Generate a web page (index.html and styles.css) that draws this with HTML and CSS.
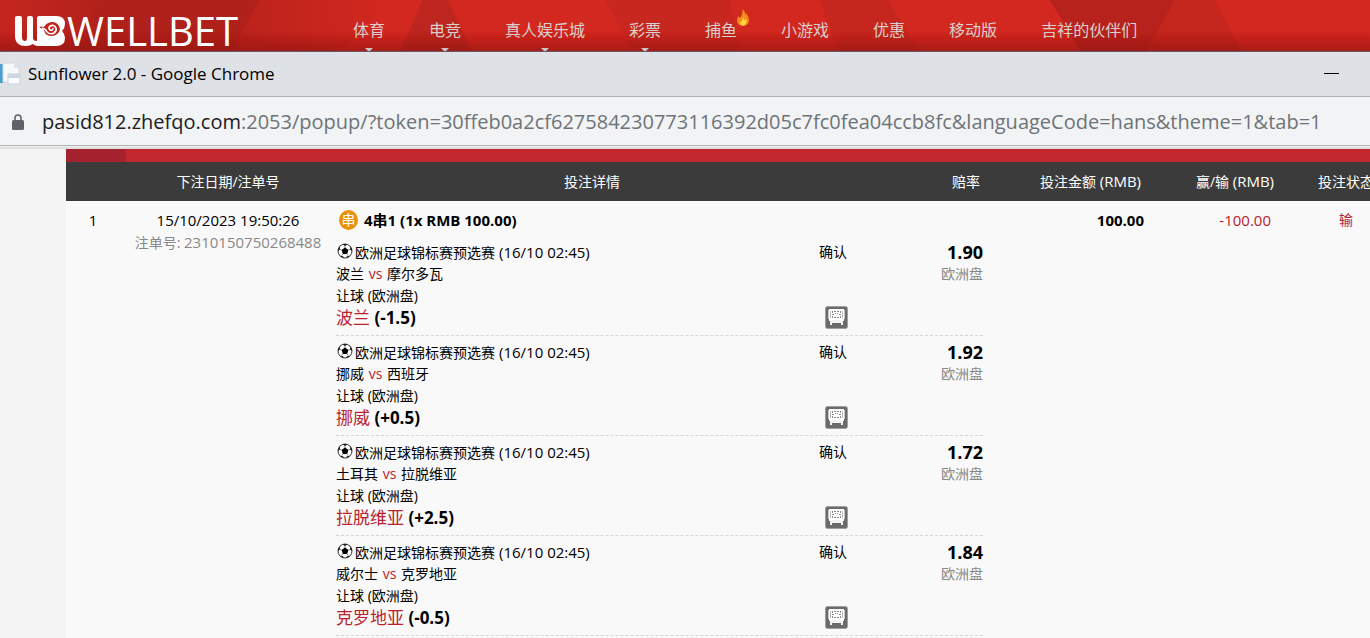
FILE: index.html
```html
<!DOCTYPE html>
<html lang="zh-Hans">
<head>
<meta charset="utf-8">
<meta name="viewport" content="width=device-width, initial-scale=1">
<title>Sunflower 2.0</title>
<link rel="stylesheet" href="styles.css">
</head>
<body>
<svg class="sprites" aria-hidden="true">
  <symbol id="ball" viewBox="0 0 16 16">
    <circle cx="8" cy="8" r="7" fill="#fff" stroke="#333" stroke-width="1"/>
    <path d="M8 4.6l3.4 2.4-1.3 3.9H5.9L4.6 7z" fill="#000"/>
    <path d="M5.4 1.4L8 3l2.600-1.600A7 7 0 0 0 5.400 1.400zM1 8.200l2-1.900-.400-2.700A7 7 0 0 0 1 8.200zM15 8.200l-2-1.900.400-2.700A7 7 0 0 1 15 8.200zM3.200 13l2.900.200.600 1.700A7 7 0 0 1 3.200 13zM12.800 13l-2.900.200-.600 1.700A7 7 0 0 0 12.800 13z" fill="#111"/>
    <path d="M8 3v2M3 6.300l1.800.800M13 6.300l-1.800.800M6 10.700l-1.200 2M10 10.700l1.200 2" stroke="#555" stroke-width=".7"/>
  </symbol>
  <symbol id="board" viewBox="0 0 23 23">
    <rect x=".5" y=".5" width="22" height="22" rx="2" fill="#6b6b6b" stroke="#a0a0a0"/>
    <path d="M4 3h15v11H4z" fill="#fff"/>
    <path d="M3 4h1v9H3zM19 4h1v9h-1z" fill="#c9c9c9"/>
    <path d="M4 14h15v1h-1v4h-2v-2H7v2H5v-4H4z" fill="#f4f4f4"/>
    <path d="M5 5h1v7H5zM17 5h1v7h-1z" fill="#bbb"/>
    <path d="M7 5h1v2H7zM9 5h2v1H9zM10 7h1v1h-1zM7 8h2v1H7zM7 10h1v2H7zM9 11h2v1H9zM12 5h2v1h-2zM15 5h1v2h-1zM12 7h1v1h-1zM14 8h2v1h-2zM15 10h1v2h-1zM12 11h2v1h-2z" fill="#8d8d8d"/>
  </symbol>
</svg>

<header class="site">
  <svg class="site-backdrop" viewBox="0 0 1370 51" preserveAspectRatio="none" aria-hidden="true">
    <defs>
      <linearGradient id="g1"><stop offset="0" stop-color="#c4261f"/><stop offset="1" stop-color="#b3211b"/></linearGradient>
      <linearGradient id="g2"><stop offset="0" stop-color="#ba231c"/><stop offset="1" stop-color="#d2281f"/></linearGradient>
      <linearGradient id="g3" x2="0" y2="1"><stop offset=".6" stop-color="#900" stop-opacity="0"/><stop offset="1" stop-color="#8b1712" stop-opacity=".6"/></linearGradient>
    </defs>
    <path d="M0 0h1370v51H0z" fill="#d2281f"/>
    <path d="M0 0h97L75 51H0z" fill="url(#g1)"/>
    <path d="M97 0h163l-28 51H75z" fill="#b0211b"/>
    <path d="M260 0h130L340 51H232z" fill="url(#g2)"/>
    <path d="M423 0h25l24 51h-72z" fill="#bd261e"/>
    <path d="M605 0h125l10 51H634z" fill="#c8271f"/>
    <path d="M820 0h68l30 51h-80z" fill="#c5261e"/>
    <path d="M1050 0h125l-28 51h-67z" fill="#b7231c"/>
    <path d="M1175 0h40l26 51h-94z" fill="#c5261e"/>
    <path d="M0 0h1370v51H0z" fill="url(#g3)"/>
  </svg>
  <a class="logo" href="#" aria-label="WELLBET">
    <svg class="logo-mark" viewBox="0 0 50 30" aria-hidden="true">
      <path d="M2 0h3a2 2 0 0 1 2 2v19q0 4 3 4 2 0 2-4V2a2 2 0 0 1 2-2h2a2 2 0 0 1 2 2v20q0 3 4 3V2q0-2 2-2h17q9 0 9 8 0 4-3 7 3 3 3 7 0 8-9 8H23q-3 0-5-2-3 2-7 2-11 0-11-10V2q0-2 2-2z" fill="#fff"/>
      <path d="M24 11q3-1 5 0 3-5 9-5 6 1 7 7-1 6-8 7-7 0-8-6-3-2-5-3z" fill="#c2251e"/>
      <path d="M27 12q4 1 5 4 3 3 7 1 3-2 2-5-2-4-6-2-2 2 0 4 3 1 3-2" fill="none" stroke="#fff" stroke-width="1.600"/>
    </svg>
    <span class="logo-text">WELLBET</span>
  </a>
  <nav class="menu">
    <a class="has-sub" href="#">体育</a>
    <a class="has-sub" href="#">电竞</a>
    <a class="has-sub" href="#">真人娱乐城</a>
    <a class="has-sub" href="#">彩票</a>
    <a href="#">捕鱼<svg class="flame" viewBox="0 0 14 20" aria-hidden="true"><path d="M6.500 0q4 4 3 7l1.500-2q3 5 3 8 0 6-6 7-7 0-8-6 0-3 2-6l1 3Q7 7 6.500 0z" fill="#f58a1f"/><path d="M7.500 9q0 4 2 4l1-2q2 7-3 8.500-5-1-4-5l1 1q2-2 3-6.500z" fill="#ffd43b"/></svg></a>
    <a href="#">小游戏</a>
    <a href="#">优惠</a>
    <a href="#">移动版</a>
    <a href="#">吉祥的伙伴们</a>
  </nav>
</header>

<main class="window">
  <div class="titlebar">
    <svg class="app-icon" viewBox="0 0 22 24" aria-hidden="true">
      <path d="M0 2h3v19H0z" fill="#4a9fd3"/>
      <path d="M3 1h11l5 4v15H3z" fill="#f6f8fa" stroke="#d3d8dd"/>
      <path d="M14 1v5h5" fill="#dfe4e8"/>
      <path d="M8 12h12v10H8z" fill="#fbfcfd" stroke="#ccd2d8"/>
      <path d="M8 12h12v4H8z" fill="#ced6df"/>
    </svg>
    <h1 class="title">Sunflower 2.0 - Google Chrome</h1>
    <button class="minimize" type="button" aria-label="Minimize"></button>
  </div>
  <div class="address">
    <svg class="lock" viewBox="0 0 12 16" aria-hidden="true"><rect y="6" width="12" height="10" rx="1.500" fill="#5f6368"/><path d="M3 7V4a3 3 0 0 1 6 0v3" fill="none" stroke="#5f6368" stroke-width="1.600"/></svg>
    <div class="url"><span class="host">pasid812.zhefqo.com</span>:2053/popup/?token=30ffeb0a2cf627584230773116392d05c7fc0fea04ccb8fc&amp;languageCode=hans&amp;theme=1&amp;tab=1</div>
  </div>

  <section class="content">
    <div class="strip"><div class="strip-tab"></div></div>
    <table class="bets">
      <colgroup><col class="c-no"><col class="c-date"><col class="c-detail"><col class="c-odds"><col class="c-stake"><col class="c-win"><col class="c-status"></colgroup>
      <thead>
        <tr><th></th><th>下注日期/注单号</th><th>投注详情</th><th class="right">赔率</th><th class="right">投注金额 <span class="num">(RMB)</span></th><th class="win-head">赢/输 <span class="num">(RMB)</span></th><th>投注状态</th></tr>
      </thead>
      <tbody>
        <tr>
          <td class="center num">1</td>
          <td class="center"><div class="num">15/10/2023 19:50:26</div><div class="muted">注单号: <span class="num">2310150750268488</span></div></td>
          <td colspan="2">
            <div class="parlay"><span class="badge">串</span><strong>4串1 (1x RMB 100.00)</strong></div>
            <ul class="legs">
              <li class="leg">
                <div class="pick"><div class="league"><svg class="ball"><use href="#ball"/></svg><span>欧洲足球锦标赛预选赛</span><span class="num">(16/10 02:45)</span></div><div>波兰 <span class="red vs">vs</span> 摩尔多瓦</div><div>让球 (欧洲盘)</div><div class="choice"><span class="red">波兰</span> <strong>(-1.5)</strong></div></div>
                <div class="state"><span>确认</span><svg class="board"><use href="#board"/></svg></div>
                <div class="odds"><strong>1.90</strong><span class="muted">欧洲盘</span></div>
              </li>
              <li class="leg">
                <div class="pick"><div class="league"><svg class="ball"><use href="#ball"/></svg><span>欧洲足球锦标赛预选赛</span><span class="num">(16/10 02:45)</span></div><div>挪威 <span class="red vs">vs</span> 西班牙</div><div>让球 (欧洲盘)</div><div class="choice"><span class="red">挪威</span> <strong>(+0.5)</strong></div></div>
                <div class="state"><span>确认</span><svg class="board"><use href="#board"/></svg></div>
                <div class="odds"><strong>1.92</strong><span class="muted">欧洲盘</span></div>
              </li>
              <li class="leg">
                <div class="pick"><div class="league"><svg class="ball"><use href="#ball"/></svg><span>欧洲足球锦标赛预选赛</span><span class="num">(16/10 02:45)</span></div><div>土耳其 <span class="red vs">vs</span> 拉脱维亚</div><div>让球 (欧洲盘)</div><div class="choice"><span class="red">拉脱维亚</span> <strong>(+2.5)</strong></div></div>
                <div class="state"><span>确认</span><svg class="board"><use href="#board"/></svg></div>
                <div class="odds"><strong>1.72</strong><span class="muted">欧洲盘</span></div>
              </li>
              <li class="leg">
                <div class="pick"><div class="league"><svg class="ball"><use href="#ball"/></svg><span>欧洲足球锦标赛预选赛</span><span class="num">(16/10 02:45)</span></div><div>威尔士 <span class="red vs">vs</span> 克罗地亚</div><div>让球 (欧洲盘)</div><div class="choice"><span class="red">克罗地亚</span> <strong>(-0.5)</strong></div></div>
                <div class="state"><span>确认</span><svg class="board"><use href="#board"/></svg></div>
                <div class="odds"><strong>1.84</strong><span class="muted">欧洲盘</span></div>
              </li>
            </ul>
          </td>
          <td class="right stake">100.00</td>
          <td class="right red num win">-100.00</td>
          <td class="center red">输</td>
        </tr>
      </tbody>
    </table>
  </section>
</main>
</body>
</html>
```

FILE: styles.css
```css
* { box-sizing: border-box; }
html, body { height: 100%; }
body {
  margin: 0;
  display: flex;
  flex-direction: column;
  overflow: hidden;
  background: #f3f3f3;
  color: #000;
  font: 14px/22px "Open Sans", "Noto Sans CJK SC", sans-serif;
}
a { color: inherit; text-decoration: none; }
.sprites { position: absolute; width: 0; height: 0; }

/* Site header */
.site {
  position: relative;
  flex: none;
  display: flex;
  height: 52px;
  padding-left: 15px;
  border-bottom: 1px solid #6b5a64;
  overflow: hidden;
}
.site-backdrop { position: absolute; inset: 0; width: 100%; height: 100%; }
.logo { position: relative; flex: none; display: flex; gap: 2px; width: 338px; padding-top: 16px; color: #fff; }
.logo-mark { width: 50px; height: 30px; }
.logo-text { font: 500 40px/30px "Open Sans", sans-serif; }
.menu { position: relative; display: flex; gap: 44px; color: #d9cfcd; font-size: 16px; line-height: 24px; white-space: nowrap; }
.menu a { position: relative; padding-top: 18px; }
.has-sub::after {
  content: "";
  position: absolute;
  top: 48px;
  left: 50%;
  margin-left: -4px;
  border: 4px solid transparent;
  border-top-color: #c9c4c6;
}
.flame { position: absolute; top: 8px; right: -12px; width: 12px; height: 19px; }

/* Browser window */
.window { flex: 1; min-height: 0; display: flex; flex-direction: column; }
.titlebar { flex: none; display: flex; align-items: center; height: 45px; padding-right: 31px; background: #dee1e6; border-bottom: 1px solid #b1b1b1; }
.app-icon { width: 22px; height: 24px; margin-right: 6px; }
.title { flex: 1; margin: 0; font-size: 17px; line-height: 24px; font-weight: 400; }
.minimize { width: 15px; height: 15px; padding: 0; border: 0; border-bottom: 1px solid #000; background: none; margin-bottom: 15px; }
.address { flex: none; display: flex; align-items: center; gap: 18px; height: 52px; padding: 0 12px 3px; background: #f1f3f4; box-shadow: inset 0 -2px #dcdee0, inset 0 -3px #f1f3f4, inset 0 -4px #b1b1b1; white-space: nowrap; }
.lock { flex: none; width: 12px; height: 16px; }
.url { color: #6f7378; font-size: 20px; line-height: 30px; }
.host { color: #202124; }

/* Bet list */
.content { flex: 1; min-height: 0; margin-left: 66px; overflow: hidden; background: #f9f9f9; }
.strip { height: 13px; background: #c3272f; }
.strip-tab { width: 60px; height: 100%; background: #a5232f; }
.bets { width: 100%; min-width: 1328px; table-layout: fixed; border-collapse: collapse; }
.c-no { width: 54px; }
.c-date { width: 216px; }
.c-detail { width: 512px; }
.c-odds { width: 135px; }
.c-stake { width: 161px; }
.c-win { width: 154px; }
.c-status { width: auto; }
.bets th { height: 39px; padding: 0; background: #3b3b3b; color: #fff; font-weight: 400; }
.bets th.right { padding-right: 3px; }
.bets th.win-head { padding-left: 28px; }
.bets td { padding: 8px 0 0; vertical-align: top; }
.bets .win { padding-right: 27px; }
.bets .right { text-align: right; }
.center { text-align: center; }
.num { font-size: 15px; }
.muted { color: #888; }
.red { color: #b9222e; }
.vs { margin: 0 1px; }
.stake { font-size: 15px; font-weight: 700; }
.parlay { display: flex; align-items: center; gap: 6px; padding-left: 3px; margin-bottom: 5px; font-size: 15px; }
.badge { width: 19px; height: 20px; border-radius: 50%; background: #ec9107; color: #fff; font-size: 14px; line-height: 20px; text-align: center; }
.legs { margin: 0; padding: 0; list-style: none; }
.leg { display: grid; grid-template-columns: 1fr 36px 128px; padding: 5px 0 6px; border-bottom: 1px dashed #d5d5d5; }
.league { display: flex; align-items: baseline; height: 22px; }
.league .num { margin-left: 4px; }
.ball { align-self: flex-start; width: 16px; height: 16px; margin: 2px 2px 0 1px; }
.choice { font-size: 17px; }
.state { display: flex; flex-direction: column; justify-content: space-between; }
.board { width: 23px; height: 23px; margin-left: 6px; }
.odds { display: flex; flex-direction: column; align-items: flex-end; }
.odds strong { font-size: 18px; }
```
